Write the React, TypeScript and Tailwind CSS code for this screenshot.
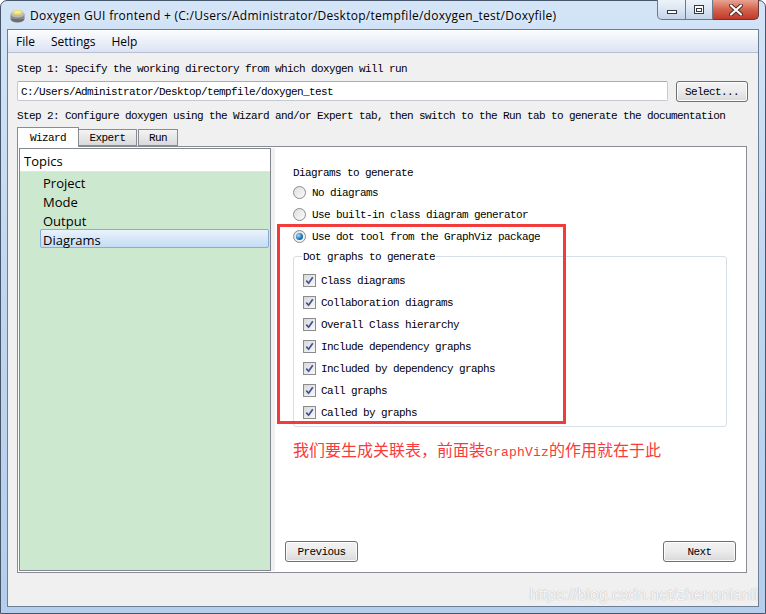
import type { ReactNode } from 'react'

const MONO = "font-['Liberation_Mono',monospace] text-[11px] tracking-[-0.6px] text-black"
const UI = "font-['Open_Sans',sans-serif] text-black"

const dotGraphs = [
  'Class diagrams',
  'Collaboration diagrams',
  'Overall Class hierarchy',
  'Include dependency graphs',
  'Included by dependency graphs',
  'Call graphs',
  'Called by graphs',
]

const topics = ['Project', 'Mode', 'Output', 'Diagrams']

function Radio({ checked }: { checked?: boolean }) {
  return (
    <span className="w-[13px] h-[13px] rounded-full border border-[#8b8b8b] bg-gradient-to-br from-[#dedede] to-[#fbfbfb] flex items-center justify-center shrink-0">
      {checked && (
        <span className="w-[7px] h-[7px] rounded-full bg-[radial-gradient(circle_at_35%_35%,#a6e0ff,#1976c0_55%,#0b4a86)]" />
      )}
    </span>
  )
}

function CheckBox() {
  return (
    <span className="w-[13px] h-[13px] border border-[#8b8b8b] bg-gradient-to-br from-[#d8d8d8] to-[#f8f8f8] flex items-center justify-center shrink-0">
      <svg width="9" height="9" viewBox="0 0 9 9">
        <path d="M1.3 4.6 L3.6 7.2 L7.8 1.2" fill="none" stroke="#3d5299" strokeWidth="1.7" />
      </svg>
    </span>
  )
}

function Button({ children, className }: { children: ReactNode; className: string }) {
  return (
    <div
      className={`${className} h-[21px] pt-[2px] rounded-[3px] border border-[#707070] bg-gradient-to-b from-[#f3f3f3] via-[#ebebeb] to-[#d9d9d9] flex items-center justify-center shadow-[inset_0_0_0_1px_#fcfcfc] ${MONO}`}
    >
      {children}
    </div>
  )
}

function DoxyIcon() {
  return (
    <svg width="17" height="17" viewBox="0 0 17 17">
      <ellipse cx="8.5" cy="12" rx="7" ry="3.5" fill="#6f6f6f" />
      <rect x="1.5" y="7" width="14" height="5" fill="#8a8a8a" />
      <ellipse cx="8.5" cy="7" rx="7" ry="3.5" fill="#b9b9b9" />
      <ellipse cx="8.5" cy="5.5" rx="5.5" ry="2.6" fill="#e7d46a" />
      <ellipse cx="8.5" cy="5" rx="3.5" ry="1.5" fill="#f7ec9c" />
    </svg>
  )
}

export default function App() {
  return (
    <div className="relative w-[766px] h-[614px] bg-white overflow-hidden">
      <div className="h-full flex flex-col rounded-t-[7px] border border-[#46566b] bg-gradient-to-b from-[#d3e4f7] via-[#c0d6ef] to-[#b4ceeb] px-[6px] pb-[6px]">
        {/* title bar */}
        <div className="h-[28px] flex items-center shrink-0">
          <span className="ml-[2px] flex">
            <DoxyIcon />
          </span>
          <span className={`ml-[4px] pt-px text-[12px] tracking-[0.27px] ${UI} [text-shadow:0_0_6px_#ffffff]`}>
            Doxygen GUI frontend + (C:/Users/Administrator/Desktop/tempfile/doxygen_test/Doxyfile)
          </span>
          <div className="ml-auto self-start -mt-px h-[20px] flex">
            <div className="w-[29px] rounded-bl-[5px] border border-t-0 border-[#6b7a90] bg-gradient-to-b from-[#eef3fa] via-[#dbe5f2] to-[#c3d3e8] flex items-end justify-center pb-[5px]">
              <span className="w-[10px] h-[4px] border border-[#33393f] bg-white" />
            </div>
            <div className="w-[27px] border-b border-r border-[#6b7a90] bg-gradient-to-b from-[#eef3fa] via-[#dbe5f2] to-[#c3d3e8] flex items-center justify-center">
              <span className="w-[10px] h-[9px] border border-[#33393f] bg-white flex items-center justify-center">
                <span className="w-[6px] h-[4px] border border-[#33393f]" />
              </span>
            </div>
            <div className="w-[46px] rounded-br-[5px] border-b border-r border-[#6b3a36] bg-gradient-to-b from-[#e8a393] via-[#d4624d] to-[#c0392a] flex items-center justify-center">
              <svg width="14" height="12" viewBox="0 0 14 12">
                <path d="M2 1.5 L12 10.5 M12 1.5 L2 10.5" stroke="#4a2a26" strokeWidth="4" strokeLinecap="round" />
                <path d="M2 1.5 L12 10.5 M12 1.5 L2 10.5" stroke="#ffffff" strokeWidth="2.2" strokeLinecap="round" />
              </svg>
            </div>
          </div>
        </div>

        {/* client area */}
        <div className="flex-1 flex flex-col border border-[#6d7f97] bg-[#f0f0f0] min-h-0">
          <div className={`h-[23px] shrink-0 pt-[2px] flex items-center border-b border-[#b6c0d2] bg-gradient-to-b from-[#fcfdfe] to-[#dce3f2] text-[12px] ${UI}`}>
            <span className="px-[8px]">File</span>
            <span className="px-[8px]">Settings</span>
            <span className="px-[8px]">Help</span>
          </div>

          <div className="flex-1 flex flex-col pl-[9px] pr-[10px] pb-[33px] min-h-0">
            <div className={`mt-[9px] h-[12px] pt-px leading-[12px] ${MONO}`}>
              Step 1: Specify the working directory from which doxygen will run
            </div>
            <div className="mt-[7px] flex gap-[8px]">
              <div className={`flex-1 h-[20px] pt-[2px] border border-[#c4c9d2] border-t-[#abadb3] rounded-[2px] bg-white flex items-center pl-[3px] ${MONO}`}>
                C:/Users/Administrator/Desktop/tempfile/doxygen_test
              </div>
              <Button className="w-[72px]">Select...</Button>
            </div>
            <div className={`mt-[7px] h-[12px] pt-px leading-[12px] ${MONO}`}>
              Step 2: Configure doxygen using the Wizard and/or Expert tab, then switch to the Run tab to generate the documentation
            </div>

            {/* tabs */}
            <div className="mt-[6px] h-[19px] flex items-end">
              <div className={`relative z-10 w-[62px] h-[20px] pt-[2px] -mb-px border border-b-0 border-[#898c95] bg-white flex items-center justify-center ${MONO}`}>
                Wizard
              </div>
              <div className={`w-[58px] h-[17px] pt-[2px] border border-l-0 border-[#898c95] bg-gradient-to-b from-[#f4f4f4] to-[#dadada] flex items-center justify-center ${MONO}`}>
                Expert
              </div>
              <div className={`w-[40px] h-[17px] pt-[2px] ml-px border border-[#898c95] bg-gradient-to-b from-[#f4f4f4] to-[#dadada] flex items-center justify-center ${MONO}`}>
                Run
              </div>
            </div>

            <div className="flex-1 mr-px flex border border-[#898c95] bg-white pl-px pt-px pb-px min-h-0">
              {/* topics list */}
              <div className="w-[252px] flex flex-col border border-[#828790]">
                <div className={`h-[23px] pt-[4px] border-b border-[#e3e3e3] bg-white flex items-center pl-[4px] text-[13px] ${UI}`}>
                  Topics
                </div>
                <div className={`flex-1 bg-[#cce8cf] flex flex-col text-[13px] ${UI}`}>
                  {topics.map((t) => (
                    <div key={t} className="h-[19px] flex items-center">
                      {t === 'Diagrams' ? (
                        <div className="ml-[20px] mr-px flex-1 h-[19px] pt-[4px] border border-[#84acdd] rounded-[2px] bg-gradient-to-b from-[#eaf3fc] to-[#c5dcf4] pl-[2px] flex items-center">
                          {t}
                        </div>
                      ) : (
                        <span className="ml-[23px] pt-[4px]">{t}</span>
                      )}
                    </div>
                  ))}
                </div>
              </div>
              <div className="w-[4px] bg-[#f0f0f0]" />

              {/* diagrams page */}
              <div className="flex-1 flex flex-col bg-white">
                <div className="px-[18px] pt-[18px] flex flex-col">
                  <div className={`h-[12px] pt-px leading-[12px] ${MONO}`}>Diagrams to generate</div>
                  <div className="mt-[3px] flex flex-col">
                    {['No diagrams', 'Use built-in class diagram generator', 'Use dot tool from the GraphViz package'].map((r, i) => (
                      <div key={r} className="h-[22px] flex items-center gap-[6px]">
                        <Radio checked={i === 2} />
                        <span className={`pt-[2px] ${MONO}`}>{r}</span>
                      </div>
                    ))}
                  </div>
                  <fieldset className="mt-[3px] mr-[1px] border border-[#d5dfe5] rounded-[3px] pl-[9px] pt-[7px] pb-[3px]">
                    <legend className={`ml-[-1px] px-[1px] h-[12px] pt-px leading-[12px] ${MONO}`}>Dot graphs to generate</legend>
                    {dotGraphs.map((g) => (
                      <div key={g} className="h-[22px] flex items-center gap-[5px]">
                        <CheckBox />
                        <span className={`pt-[2px] ${MONO}`}>{g}</span>
                      </div>
                    ))}
                  </fieldset>
                  <div className="mt-[14px] h-[16px] leading-[16px] text-[16px] text-[#fa3a3a] font-['Noto_Sans_CJK_SC',sans-serif] whitespace-nowrap">
                    我们要生成关联表，前面装
                    <span className="font-['Liberation_Mono',monospace] text-[13px] tracking-[0.2px]">GraphViz</span>
                    的作用就在于此
                  </div>
                </div>
                <div className="mt-auto px-[10px] pb-[9px] flex justify-between">
                  <Button className="w-[73px]">Previous</Button>
                  <Button className="w-[73px]">Next</Button>
                </div>
              </div>
            </div>
          </div>
        </div>
      </div>

      {/* annotation */}
      <div className="absolute left-[277px] top-[224px] w-[289px] h-[200px] border-[3px] border-[#f23c3c]" />
      <div className="absolute right-[8px] top-[585px] text-[16px] leading-[20px] font-['Liberation_Sans',sans-serif] text-white/90 [text-shadow:0_0_1px_#9a9a9a]">
        https://blog.csdn.net/zhengnianli
      </div>
    </div>
  )
}
